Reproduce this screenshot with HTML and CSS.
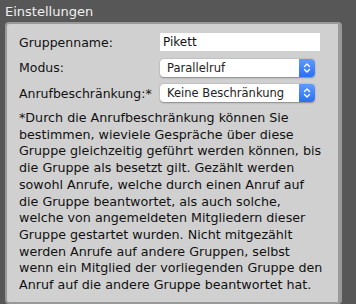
FILE: index.html
```html
<!DOCTYPE html>
<html lang="de">
<head>
  <meta charset="UTF-8">
  <title>Einstellungen</title>
  <link rel="stylesheet" href="styles.css">
</head>
<body>
  <div class="section">
    <h2 class="section-title">Einstellungen</h2>
    <div class="panel">
      <div class="form-row">
        <label for="name">Gruppenname:</label>
        <input type="text" id="name" class="text-input" value="Pikett">
      </div>
      <div class="form-row">
        <label>Modus:</label>
        <div class="select">
          <span class="select-value">Parallelruf</span>
          <span class="stepper">
            <svg width="8" height="12" viewBox="0 0 8 12"><path d="M1.5 4.5 L4 2 L6.5 4.5 M1.5 7.5 L4 10 L6.5 7.5" fill="none" stroke="#fff" stroke-width="1.4" stroke-linecap="round" stroke-linejoin="round"/></svg>
          </span>
        </div>
      </div>
      <div class="form-row">
        <label>Anrufbeschränkung:*</label>
        <div class="select">
          <span class="select-value">Keine Beschränkung</span>
          <span class="stepper">
            <svg width="8" height="12" viewBox="0 0 8 12"><path d="M1.5 4.5 L4 2 L6.5 4.5 M1.5 7.5 L4 10 L6.5 7.5" fill="none" stroke="#fff" stroke-width="1.4" stroke-linecap="round" stroke-linejoin="round"/></svg>
          </span>
        </div>
      </div>
      <p class="note">*Durch die Anrufbeschränkung können Sie bestimmen, wieviele Gespräche über diese Gruppe gleichzeitig geführt werden können, bis die Gruppe als besetzt gilt. Gezählt werden sowohl Anrufe, welche durch einen Anruf auf die Gruppe beantwortet, als auch solche, welche von angemeldeten Mitgliedern dieser Gruppe gestartet wurden. Nicht mitgezählt werden Anrufe auf andere Gruppen, selbst wenn ein Mitglied der vorliegenden Gruppe den Anruf auf die andere Gruppe beantwortet hat.</p>
    </div>
  </div>
</body>
</html>
```

FILE: styles.css
```css
body {
  margin: 0;
  background-color: #575757;
  font-family: "DejaVu Sans", Verdana, sans-serif;
  color: #111;
}
.section {
  padding: 3px 14px 0 5px;
}
.section-title {
  margin: 0 0 2px 0;
  font-size: 13px;
  font-weight: normal;
  color: #f0f0f0;
  line-height: 17px;
}
.panel {
  background-color: #d0d0d0;
  border: 2px solid #999;
  border-right-width: 4px;
  border-radius: 4px;
  padding: 9px 14px 8px 12px;
  font-size: 12.5px;
}
.form-row {
  display: flex;
  align-items: center;
  margin-bottom: 7.5px;
}
.form-row label {
  width: 141px;
  flex-shrink: 0;
}
.text-input {
  width: 160px;
  height: 18px;
  box-sizing: border-box;
  border: none;
  padding: 0 3px;
  font: 12px "DejaVu Sans", sans-serif;
  background: #fff;
  color: #111;
}
.select {
  width: 155px;
  height: 18px;
  display: flex;
  align-items: center;
  background: #fff;
  border-radius: 4px;
  box-shadow: 0 0.5px 1.5px rgba(0, 0, 0, 0.35);
  font-size: 11.5px;
  color: #222;
  overflow: hidden;
}
.select-value {
  flex: 1;
  padding-left: 7px;
}
.stepper {
  width: 16px;
  height: 18px;
  display: flex;
  align-items: center;
  justify-content: center;
  background: linear-gradient(#5e9bff, #2a6ff5);
}
.note {
  margin: 8px 0 0 0;
  font-size: 12.7px;
  line-height: 16.7px;
}
```
